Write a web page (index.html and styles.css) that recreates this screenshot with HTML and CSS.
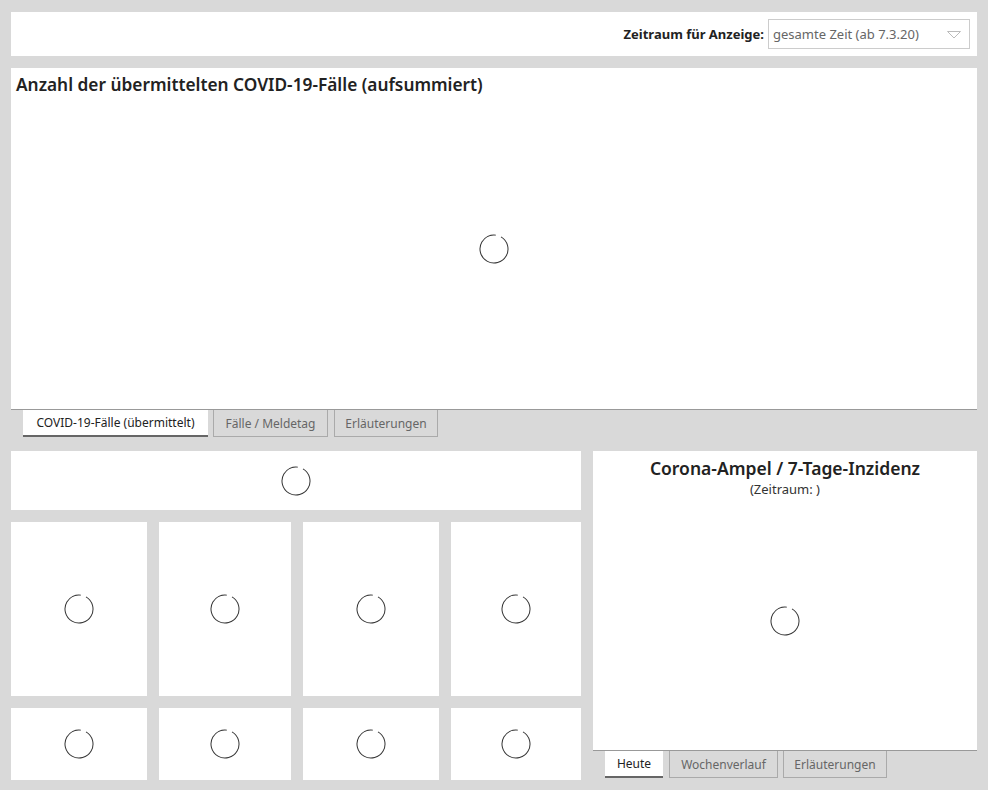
FILE: index.html
```html
<!DOCTYPE html>
<html lang="de">
<head>
<meta charset="utf-8">
<title>COVID-19 Dashboard</title>
<link rel="stylesheet" href="styles.css">
</head>
<body>
<div class="page">
  <header class="topbar">
    <span class="period-label">Zeitraum für Anzeige:</span>
    <div class="select">
      <span>gesamte Zeit (ab 7.3.20)</span>
      <svg class="caret" width="14" height="8" viewBox="0 0 14 8"><path d="M0.5 0.5 L7 7 L13.5 0.5 Z" fill="none" stroke="#bbb" stroke-width="1"/></svg>
    </div>
  </header>

  <section class="chart-panel">
    <div class="panel main-panel">
      <h1 class="title">Anzahl der übermittelten COVID-19-Fälle (aufsummiert)</h1>
      <div class="center"><svg class="spin" width="30" height="30" viewBox="0 0 30 30"><circle cx="15" cy="15" r="14" fill="none" stroke="#333" stroke-width="1" stroke-dasharray="82 6" transform="rotate(-60 15 15)"/></svg></div>
    </div>
    <nav class="tabs">
      <span class="tab active w185">COVID-19-Fälle (übermittelt)</span>
      <span class="tab w115">Fälle / Meldetag</span>
      <span class="tab w104 gap6">Erläuterungen</span>
    </nav>
  </section>

  <section class="bottom">
    <div class="left">
      <div class="box top-box"><div class="center"><svg class="spin" width="30" height="30" viewBox="0 0 30 30"><circle cx="15" cy="15" r="14" fill="none" stroke="#333" stroke-width="1" stroke-dasharray="82 6" transform="rotate(-60 15 15)"/></svg></div></div>
      <div class="grid">
        <div class="box"><div class="center"><svg class="spin" width="30" height="30" viewBox="0 0 30 30"><circle cx="15" cy="15" r="14" fill="none" stroke="#333" stroke-width="1" stroke-dasharray="82 6" transform="rotate(-60 15 15)"/></svg></div></div>
        <div class="box"><div class="center"><svg class="spin" width="30" height="30" viewBox="0 0 30 30"><circle cx="15" cy="15" r="14" fill="none" stroke="#333" stroke-width="1" stroke-dasharray="82 6" transform="rotate(-60 15 15)"/></svg></div></div>
        <div class="box"><div class="center"><svg class="spin" width="30" height="30" viewBox="0 0 30 30"><circle cx="15" cy="15" r="14" fill="none" stroke="#333" stroke-width="1" stroke-dasharray="82 6" transform="rotate(-60 15 15)"/></svg></div></div>
        <div class="box"><div class="center"><svg class="spin" width="30" height="30" viewBox="0 0 30 30"><circle cx="15" cy="15" r="14" fill="none" stroke="#333" stroke-width="1" stroke-dasharray="82 6" transform="rotate(-60 15 15)"/></svg></div></div>
        <div class="box"><div class="center"><svg class="spin" width="30" height="30" viewBox="0 0 30 30"><circle cx="15" cy="15" r="14" fill="none" stroke="#333" stroke-width="1" stroke-dasharray="82 6" transform="rotate(-60 15 15)"/></svg></div></div>
        <div class="box"><div class="center"><svg class="spin" width="30" height="30" viewBox="0 0 30 30"><circle cx="15" cy="15" r="14" fill="none" stroke="#333" stroke-width="1" stroke-dasharray="82 6" transform="rotate(-60 15 15)"/></svg></div></div>
        <div class="box"><div class="center"><svg class="spin" width="30" height="30" viewBox="0 0 30 30"><circle cx="15" cy="15" r="14" fill="none" stroke="#333" stroke-width="1" stroke-dasharray="82 6" transform="rotate(-60 15 15)"/></svg></div></div>
        <div class="box"><div class="center"><svg class="spin" width="30" height="30" viewBox="0 0 30 30"><circle cx="15" cy="15" r="14" fill="none" stroke="#333" stroke-width="1" stroke-dasharray="82 6" transform="rotate(-60 15 15)"/></svg></div></div>
      </div>
    </div>
    <div class="right">
      <div class="panel ampel-panel">
        <h2 class="ampel-title">Corona-Ampel / 7-Tage-Inzidenz</h2>
        <p class="ampel-sub">(Zeitraum: )</p>
        <div class="center"><svg class="spin" width="30" height="30" viewBox="0 0 30 30"><circle cx="15" cy="15" r="14" fill="none" stroke="#333" stroke-width="1" stroke-dasharray="82 6" transform="rotate(-60 15 15)"/></svg></div>
      </div>
      <nav class="tabs">
        <span class="tab active w58">Heute</span>
        <span class="tab w109 gap6">Wochenverlauf</span>
        <span class="tab w104">Erläuterungen</span>
      </nav>
    </div>
  </section>
</div>
</body>
</html>
```
FILE: styles.css
```css
* { box-sizing: border-box; }
html, body { margin: 0; padding: 0; }
body {
  background: #d9d9d9;
  font-family: "Noto Sans", "Open Sans", sans-serif;
  color: #222;
  width: 988px;
  height: 790px;
  overflow: hidden;
}
.page {
  padding: 12px 11px 0 11px;
  display: flex;
  flex-direction: column;
}
.topbar {
  background: #fff;
  height: 44px;
  display: flex;
  align-items: center;
  justify-content: flex-end;
  padding-right: 7px;
}
.period-label {
  font-size: 13px;
  font-weight: 700;
  color: #222;
  margin-right: 4px;
}
.select {
  width: 202px;
  height: 30px;
  border: 1px solid #ccc;
  display: flex;
  align-items: center;
  justify-content: space-between;
  padding: 0 8px 0 4px;
  font-size: 13px;
  color: #666;
}
.caret { margin-top: 2px; }

.chart-panel { margin-top: 12px; }
.panel { background: #fff; }
.main-panel {
  height: 342px;
  border-bottom: 1px solid #999;
  display: flex;
  flex-direction: column;
}
.title {
  margin: 0;
  padding: 5px 0 0 5px;
  font-size: 17.3px;
  font-weight: 600;
  color: #222;
}
.center {
  flex: 1;
  display: flex;
  align-items: center;
  justify-content: center;
}
.main-panel .center { padding-bottom: 8px; }

.tabs {
  display: flex;
  gap: 5px;
  padding-left: 12px;
  height: 27px;
}
.tab {
  font-size: 12px;
  color: #666;
  background: #d9d9d9;
  border: 1px solid #aaa;
  border-top: none;
  display: flex;
  align-items: center;
  justify-content: center;
  height: 27px;
  white-space: nowrap;
}
.tab.active {
  background: #fff;
  color: #222;
  border: none;
  border-bottom: 2px solid #666;
}
.w185 { width: 185px; }
.w115 { width: 115px; }
.w104 { width: 104px; }
.w109 { width: 109px; }
.w58 { width: 58px; }
.gap6 { margin-left: 1px; }

.bottom {
  margin-top: 14px;
  display: flex;
  gap: 12px;
}
.left {
  width: 570px;
  display: flex;
  flex-direction: column;
  gap: 12px;
}
.box { background: #fff; display: flex; }
.top-box { height: 59px; }
.grid {
  display: grid;
  grid-template-columns: 136px 132px 136px 130px;
  grid-template-rows: 174px 72px;
  gap: 12px;
}
.right {
  width: 384px;
  display: flex;
  flex-direction: column;
}
.ampel-panel {
  height: 300px;
  border-bottom: 1px solid #999;
  display: flex;
  flex-direction: column;
  align-items: stretch;
  text-align: center;
}
.ampel-title {
  margin: 0;
  padding-top: 5px;
  font-size: 17.5px;
  font-weight: 600;
  color: #222;
}
.ampel-sub {
  margin: 0;
  font-size: 13px;
  color: #333;
}
.ampel-panel .center { padding-bottom: 6px; }
```
